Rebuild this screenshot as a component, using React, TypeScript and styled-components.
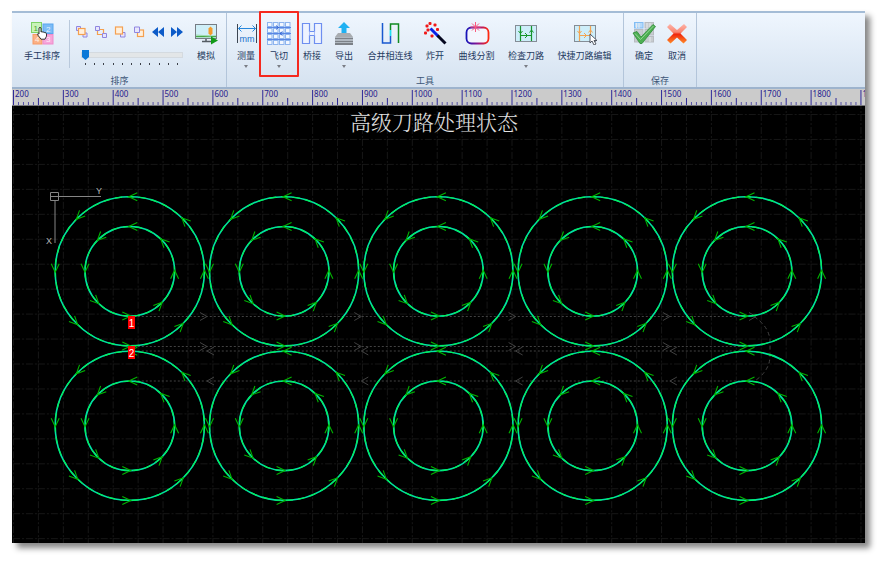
import React from "react";
import styled, { createGlobalStyle } from "styled-components";

const GlobalStyle = createGlobalStyle`
  * { box-sizing: border-box; }
  html, body, #root { height: 100%; }
  body {
    margin: 0;
    background: #fff;
    font-family: "Noto Sans", "Noto Sans CJK SC", sans-serif;
  }
`;

const Page = styled.div`
  display: flex;
  min-height: 100%;
  padding: 11px 27px 23px 12px;
`;

const Window = styled.main`
  flex: 1;
  min-width: 0;
  display: flex;
  flex-direction: column;
  box-shadow: 5px 5px 6px rgba(0, 0, 0, 0.48);
`;

const Ribbon = styled.header`
  display: flex;
  height: 78px;
  padding-left: 1px;
  border-top: 2px solid #a4bcd6;
  border-bottom: 2px solid #9db3cd;
  background: linear-gradient(#eff6fe, #d5e2f0);
`;

const Group = styled.section`
  display: flex;
  flex-direction: column;
  justify-content: space-between;
  padding: 0 3px;
  border-right: 1px solid #b3c5da;
`;

const Items = styled.div`
  display: flex;
  align-items: flex-start;
`;

const Caption = styled.h2`
  margin: 0;
  font-size: 9px;
  line-height: 12px;
  font-weight: 400;
  text-align: center;
  color: #3d5677;
`;

const Tool = styled.button<{ $width: number }>`
  position: relative;
  display: flex;
  flex-direction: column;
  align-items: center;
  width: ${(p) => p.$width}px;
  height: 60px;
  padding: 8px 0 0;
  border: 0;
  background: none;
  color: #1e3a5f;
  font-family: inherit;
  font-size: 9px;
  line-height: 12px;
  white-space: nowrap;
`;

const ToolLabel = styled.span`
  margin-top: 5px;
`;

const Caret = styled.span`
  margin-top: 3px;
  border: 2px solid transparent;
  border-top: 3px solid #7a7d85;
  border-bottom: 0;
`;

const Highlight = styled.span`
  position: absolute;
  inset: -2px -3px -4px;
  border: 2px solid #f5291f;
  border-radius: 1px;
`;

const Divider = styled.div`
  width: 1px;
  height: 48px;
  margin: 7px 0 0 1px;
  background: #b9c9dc;
`;

const OrderPanel = styled.div`
  width: 119px;
  padding: 9px 0 0 2px;
`;

const OrderRow = styled.div`
  display: flex;
`;

const SmallTool = styled.button`
  display: flex;
  justify-content: center;
  align-items: center;
  width: 19px;
  height: 20px;
  padding: 0;
  border: 0;
  background: none;
`;

const SliderBox = styled.div`
  width: 102px;
  margin: 8px 0 0 9px;
  display: flex;
  flex-direction: column;
`;

const Slider = styled.input`
  appearance: none;
  width: 100%;
  height: 10px;
  margin: 0;
  background: transparent;
  &::-webkit-slider-runnable-track {
    height: 6px;
    background: #e3e6e8;
    border: 1px solid #d4dae0;
  }
  &::-webkit-slider-thumb {
    appearance: none;
    width: 7px;
    height: 10px;
    margin-top: -3px;
    background: #0b79d8;
    clip-path: polygon(0 0, 100% 0, 100% 70%, 50% 100%, 0 70%);
  }
`;

const Ticks = styled.div`
  display: flex;
  justify-content: space-between;
  padding: 0 5px 0 4px;
  margin-top: 3px;
`;

const Tick = styled.span`
  width: 1px;
  height: 2px;
  background: #3c4048;
`;

const RulerSvg = styled.svg`
  display: block;
  width: 100%;
  height: 17px;
  background: #cbcbcb;
`;

const Stage = styled.div`
  position: relative;
  flex: 1;
  min-height: 437px;
  background: #000;
`;

const Drawing = styled.svg`
  position: absolute;
  inset: 0;
  width: 100%;
  height: 100%;
`;

const StageTitle = styled.h1`
  position: relative;
  margin: 0;
  padding-right: 9px;
  text-align: center;
  font-family: "Noto Serif CJK SC", "Noto Sans CJK SC", sans-serif;
  font-size: 21px;
  line-height: 30px;
  font-weight: 300;
  color: #e2e2e2;
`;

const Glyph = ({ children }: { children: React.ReactNode }) => (
  <svg width="26" height="24" viewBox="0 0 26 24" fill="none" aria-hidden="true">
    {children}
  </svg>
);

const ManualIcon = () => (
  <Glyph>
    <rect x="2.500" y="1.500" width="10" height="10" fill="#c9f3b9" stroke="#7ed267" />
    <rect x="14" y="3" width="10" height="9.500" fill="#7cbcf6" stroke="#5aa6ee" />
    <rect x="4" y="13.500" width="9" height="9.500" fill="#fbb185" stroke="#f79a66" />
    <rect x="14" y="13.500" width="10" height="9.500" fill="#f6a6da" stroke="#ee8bcb" />
    <g fontSize="8" fontFamily="Liberation Sans, sans-serif">
      <text x="4.500" y="9.500" fill="#4aa332">1</text>
      <text x="17" y="10.500" fill="#e6f3ff">2</text>
      <text x="6" y="21" fill="#fff0e6">4</text>
      <text x="17" y="21" fill="#ffeaf8">3</text>
    </g>
    <path d="M10 13V7q1-1.500 2 0v4q1-1 2 .3 1-.8 1.800.4 1.500-.4 1.700 1v2.500l-1.500 3h-4l-3.500-4.500q-.2-1.500 1.500-.7z" fill="#fff" stroke="#222" strokeWidth=".9" />
  </Glyph>
);

const SimulateIcon = () => (
  <Glyph>
    <rect x="2.500" y="3.500" width="21" height="14" fill="#cfeff8" stroke="#757c84" />
    <path d="M3 15.500h20" stroke="#48a948" strokeWidth="1.500" />
    <path d="M3 14l15 1" stroke="#9edbb0" />
    <path d="M17.500 5.500l2 2v5l-2 2-2-2v-5z" fill="#f49b2c" />
    <path d="M9 20.500h10M13 18v2" stroke="#555c63" strokeWidth="1.500" />
    <path d="M18 15.500l7 4-7 4z" fill="#119a18" />
  </Glyph>
);

const MeasureIcon = () => (
  <Glyph>
    <path d="M4.500 3v19M23.500 3v19" stroke="#3d4652" />
    <path d="M5.500 7.500h17M8.500 4.500l-3 3 3 3M19.500 4.500l3 3-3 3" stroke="#2687dc" />
    <text x="6.500" y="21" fontSize="9" fontFamily="Liberation Sans, sans-serif" fill="#1670cc">mm</text>
  </Glyph>
);

const FlyCutIcon = () => (
  <Glyph>
    {[1, 7, 13, 19].map((y) =>
      [1, 7, 13, 19].map((x) => (
        <rect key={`${x}-${y}`} x={x + 0.5} y={y + 0.5} width="4.500" height="4" fill="#f2f7ff" stroke="#8db4ee" />
      ))
    )}
    <path d="M1 6.500h24M1 12.500h24M1 18.500h24" stroke="#5a86e4" />
    <path d="M10 4.500l2.500 2-2.500 2M16.500 10.500l-2.500 2 2.500 2" stroke="#2455cc" strokeWidth=".8" />
  </Glyph>
);

const BridgeIcon = () => (
  <Glyph>
    <path d="M3.500 2.500h7v8h5v-8h7v20h-7v-8h-5v8h-7z" fill="#eef3ff" stroke="#6e8ff0" strokeWidth="1.200" />
    <path d="M10.500 10.500v4M15.500 10.500v4" stroke="#a9bcf6" />
  </Glyph>
);

const ExportIcon = () => (
  <Glyph>
    <path d="M13 1l6 6h-3.500v5h-5V7H7z" fill="#1fb1f2" />
    <path d="M7 12h12l3 4H4z" fill="#a8acb0" />
    <path d="M4 17.500h18M4 20.500h18M4 23h18" stroke="#7c8187" strokeWidth="2" />
  </Glyph>
);

const MergeIcon = () => (
  <Glyph>
    <path d="M5.500 2v20h8v-7" stroke="#1858cf" strokeWidth="1.500" />
    <path d="M13.500 15V9" stroke="#20dff2" strokeWidth="1.800" />
    <path d="M13.500 9V3h8v19" stroke="#118a20" strokeWidth="1.500" />
  </Glyph>
);

const ExplodeIcon = () => (
  <Glyph>
    <path d="M8.500 7.500l8 8" stroke="#0a22e8" strokeWidth="3" />
    <path d="M15.500 14.500l8 8" stroke="#05071f" strokeWidth="3" />
    {[[5, 5], [8, 2.5], [13, 4], [3.5, 12], [6, 9], [10, 15], [15.5, 8.5]].map(([x, y]) => (
      <rect key={`${x}-${y}`} x={x - 1.5} y={y - 1.5} width="3" height="3" rx="1" fill="#f01818" />
    ))}
  </Glyph>
);

const SplitIcon = () => (
  <Glyph>
    <defs>
      <linearGradient id="split" x1="0" x2="1">
        <stop offset="0" stopColor="#1714b8" />
        <stop offset=".5" stopColor="#8a1490" />
        <stop offset="1" stopColor="#ff2a10" />
      </linearGradient>
    </defs>
    <rect x="2.500" y="6.500" width="22" height="16" rx="5" fill="#f3f6fd" stroke="url(#split)" strokeWidth="1.800" />
    <path d="M11.500 1v10M6.500 6h10M8 2.500l7 7M15 2.500l-7 7" stroke="#fa5a7c" />
  </Glyph>
);

const TrackLines = ({ color }: { color: string }) => (
  <>
    <rect x="2.500" y="4.500" width="21" height="16" fill="#cdeefa" stroke="#858d96" />
    <path d="M7.500 5v15M18.500 5v15M7.500 14.500h11" stroke={color} strokeWidth="1.200" />
    <path d="M5.500 10l2 2.500 2-2.500M16.500 11.500l2-2.500 2 2.500M12 12l2.500 2.500L12 17" stroke={color} />
  </>
);

const CheckPathIcon = () => (
  <Glyph>
    <TrackLines color="#16962d" />
  </Glyph>
);

const QuickEditIcon = () => (
  <Glyph>
    <TrackLines color="#f2a452" />
    <path d="M18 13v9l2-2 2 4 2-1-2-3.500h3z" fill="#fff" stroke="#454b55" strokeWidth=".9" />
  </Glyph>
);

const ConfirmIcon = () => (
  <Glyph>
    {[0, 1, 2].map((r) =>
      [0, 1].map((c) => (
        <rect
          key={`${r}-${c}`}
          x={3.5 + c * 10.5}
          y={1.5 + r * 7}
          width="8.500"
          height="5.500"
          fill={r === 0 && c === 0 ? "#b4dafb" : "#c8ccd0"}
          stroke={r === 0 && c === 0 ? "#83bdf3" : "#b8bcc1"}
        />
      ))
    )}
    <path d="M5.500 2v5M8 2v5M16 2v5M19 2v5M16 9v5M19 16v5M8 16v5" stroke="#e6e9ec" />
    <path d="M2 12l4-1.500 4 5.500L22 3.500l2.500 2L11 22.500H9z" fill="#4daf52" stroke="#2f8b38" strokeWidth=".8" />
    <path d="M4 12.500l5.500 6L22.500 5" stroke="#92d794" />
  </Glyph>
);

const CancelIcon = () => (
  <Glyph>
    <defs>
      <linearGradient id="cancel" x1="0" y1="0" x2="0" y2="1">
        <stop offset="0" stopColor="#fdb5aa" />
        <stop offset=".42" stopColor="#fa8470" />
        <stop offset=".52" stopColor="#f0250c" />
        <stop offset="1" stopColor="#ff8c28" />
      </linearGradient>
    </defs>
    <path d="M6 3l7 6 7-6 3 3-6.500 6.500L23 19l-3.500 3.500-6.500-6-6.500 6L3 19l6.500-6.500L3 6z" fill="url(#cancel)" />
  </Glyph>
);

type OrderKind = "front" | "forward" | "backward" | "back" | "previous" | "next";

const SmallGlyph = ({ kind }: { kind: OrderKind }) => (
  <svg width="14" height="14" viewBox="0 0 14 14" fill="none" aria-hidden="true">
    {kind === "front" && (
      <>
        <path d="M1.500 1.500h4v4h-4zM8 8h4v4H8z" stroke="#8f86e0" fill="#e8e6fc" />
        <rect x="3.500" y="3.500" width="6.500" height="6" fill="#fff0dd" stroke="#f5a050" strokeWidth="1.200" />
      </>
    )}
    {kind === "forward" && (
      <>
        <path d="M3.500 5v4.500H9M5.500 4.500h4V9" stroke="#f5a050" strokeWidth="1.200" />
        <path d="M1.500 1.500h4v4h-4zM8.500 8.500h4v4h-4z" stroke="#8f86e0" fill="#e8e6fc" />
      </>
    )}
    {kind === "backward" && (
      <>
        <path d="M7.500 7.500h4.500v4.500H7.500z" stroke="#8f86e0" fill="#e8e6fc" />
        <rect x="2.500" y="2" width="7" height="7" fill="#fff0dd" stroke="#f5a050" strokeWidth="1.200" />
      </>
    )}
    {kind === "back" && (
      <>
        <rect x="5.500" y="5" width="6" height="6.500" fill="#fff0dd" stroke="#f5a050" strokeWidth="1.200" />
        <path d="M2.500 2h5v5.500h-5z" stroke="#8f86e0" fill="#e8e6fc" />
      </>
    )}
    {kind === "previous" && <path d="M7 2v10L1 7zM13 2v10L7 7z" fill="#0d5bc8" />}
    {kind === "next" && <path d="M1 2v10l6-5zM7 2v10l6-5z" fill="#0d5bc8" />}
  </svg>
);

const orderTools: { kind: OrderKind; label: string }[] = [
  { kind: "front", label: "最前" },
  { kind: "forward", label: "向前" },
  { kind: "backward", label: "向后" },
  { kind: "back", label: "最后" },
  { kind: "previous", label: "上一个" },
  { kind: "next", label: "下一个" },
];

interface ToolSpec {
  label: string;
  width: number;
  icon: React.ReactNode;
  menu?: boolean;
  highlighted?: boolean;
}

const pathTools: ToolSpec[] = [
  { label: "测量", width: 32, icon: <MeasureIcon />, menu: true },
  { label: "飞切", width: 34, icon: <FlyCutIcon />, menu: true, highlighted: true },
  { label: "桥接", width: 32, icon: <BridgeIcon /> },
  { label: "导出", width: 32, icon: <ExportIcon />, menu: true },
  { label: "合并相连线", width: 60, icon: <MergeIcon /> },
  { label: "炸开", width: 30, icon: <ExplodeIcon /> },
  { label: "曲线分割", width: 53, icon: <SplitIcon /> },
  { label: "检查刀路", width: 46, icon: <CheckPathIcon />, menu: true },
  { label: "快捷刀路编辑", width: 71, icon: <QuickEditIcon /> },
];

const saveTools: ToolSpec[] = [
  { label: "确定", width: 34, icon: <ConfirmIcon /> },
  { label: "取消", width: 32, icon: <CancelIcon /> },
];

const ToolButton = ({ label, width, icon, menu, highlighted }: ToolSpec) => (
  <Tool type="button" $width={width}>
    {icon}
    <ToolLabel>{label}</ToolLabel>
    {menu && <Caret />}
    {highlighted && <Highlight />}
  </Tool>
);

const UNIT = 49.85;

const Ruler = () => {
  const marks = Array.from({ length: 172 }, (_, i) => i);
  return (
    <RulerSvg role="img" aria-label="标尺">
      {marks.map((i) => {
        const x = 1.5 + (i * UNIT) / 10;
        const top = i % 10 === 0 ? 1 : i % 5 === 0 ? 9 : 13;
        return <path key={i} d={`M${x} ${top}V16`} stroke={i % 5 === 0 ? "#2f2a9a" : "#5652a8"} />;
      })}
      {marks.slice(0, 18).map((i) => (
        <text key={i} x={3 + i * UNIT} y="8" fontSize="8" fill="#24208f">
          {200 + i * 100}
        </text>
      ))}
      <path d="M0 16.500H4000" stroke="#77777c" />
    </RulerSvg>
  );
};

const PITCH = 154.3;
const FIRST_X = 117.8;
const ROWS = [165.3, 319.8];
const COLUMNS = [0, 1, 2, 3, 4].map((i) => FIRST_X + i * PITCH);
const RADII = [74.6, 44.8];

const Contour = ({ cx, cy, r }: { cx: number; cy: number; r: number }) => (
  <g fill="none">
    <circle cx={cx} cy={cy} r={r} stroke="#00e2a4" strokeWidth="1.600" />
    <circle cx={cx} cy={cy} r={r} stroke="#00f060" strokeWidth="1.200" strokeDasharray="7 5" />
    {[0, 45, 90, 135, 180, 225, 270, 315].map((a) => (
      <path
        key={a}
        d="M7.500 -4L-1 0L7.500 4"
        transform={`translate(${cx} ${cy}) rotate(${-a}) translate(0 ${-r})`}
        stroke="#00b400"
        strokeWidth="1.100"
      />
    ))}
  </g>
);

const travelLines = [
  { y: 210.5, direction: 1 },
  { y: 240.5, direction: 1 },
  { y: 245, direction: -1 },
  { y: 275, direction: -1 },
];

const ToolPaths = () => (
  <Drawing role="img" aria-label="刀路">
    <defs>
      <pattern id="grid" x="1" y="8" width={UNIT / 2} height="24.950" patternUnits="userSpaceOnUse">
        <path d="M.5 0V25M0 .5H25" stroke="#161616" strokeDasharray="7 2 2 2" />
      </pattern>
    </defs>
    <rect width="100%" height="100%" fill="url(#grid)" />
    <g fill="none" stroke="#424242">
      {travelLines.map(({ y, direction }) => (
        <g key={y}>
          <path d={`M${COLUMNS[0]} ${y}H${COLUMNS[4]}`} strokeDasharray="2 2" />
          {[0, 1, 2, 3].map((i) => {
            const tip = 195 + i * PITCH;
            return <path key={i} d={`M${tip - direction * 7} ${y - 4}L${tip} ${y}L${tip - direction * 7} ${y + 4}`} />;
          })}
        </g>
      ))}
      <path d="M737 206.500l7 4-7 4" />
      <path d="M742 210.500q15 10 16 24v17q-1 14-16 24" strokeDasharray="4 3" />
    </g>
    {ROWS.map((cy) => COLUMNS.map((cx) => RADII.map((r) => <Contour key={`${cx}-${cy}-${r}`} cx={cx} cy={cy} r={r} />)))}
    <g fill="none" stroke="#858585">
      <path d="M38.500 86.500h8v8h-8zM38.500 90.500H89M43 95V137" />
    </g>
    <g fontSize="9" fontFamily="Liberation Sans, sans-serif" fill="#b4b4b4">
      <text x="84" y="88">Y</text>
      <text x="34" y="138">X</text>
    </g>
    <g fontSize="10" fontFamily="Liberation Sans, sans-serif" fill="#fff" textAnchor="middle">
      <rect x="116" y="210" width="7" height="13" fill="#f00" />
      <text x="119.500" y="221">1</text>
      <rect x="116" y="240" width="7" height="13" fill="#f00" />
      <text x="119.500" y="251">2</text>
    </g>
  </Drawing>
);

export default function App() {
  return (
    <>
      <GlobalStyle />
      <Page>
        <Window>
          <Ribbon>
            <Group>
              <Items>
                <ToolButton label="手工排序" width={52} icon={<ManualIcon />} />
                <Divider />
                <OrderPanel>
                  <OrderRow>
                    {orderTools.map(({ kind, label }) => (
                      <SmallTool key={kind} type="button" aria-label={label}>
                        <SmallGlyph kind={kind} />
                      </SmallTool>
                    ))}
                  </OrderRow>
                  <SliderBox>
                    <Slider type="range" min={0} max={10} defaultValue={0} aria-label="排序进度" />
                    <Ticks>
                      {Array.from({ length: 11 }, (_, i) => (
                        <Tick key={i} />
                      ))}
                    </Ticks>
                  </SliderBox>
                </OrderPanel>
                <ToolButton label="模拟" width={34} icon={<SimulateIcon />} />
              </Items>
              <Caption>排序</Caption>
            </Group>
            <Group>
              <Items>
                {pathTools.map((tool) => (
                  <ToolButton key={tool.label} {...tool} />
                ))}
              </Items>
              <Caption>工具</Caption>
            </Group>
            <Group>
              <Items>
                {saveTools.map((tool) => (
                  <ToolButton key={tool.label} {...tool} />
                ))}
              </Items>
              <Caption>保存</Caption>
            </Group>
          </Ribbon>
          <Ruler />
          <Stage>
            <ToolPaths />
            <StageTitle>高级刀路处理状态</StageTitle>
          </Stage>
        </Window>
      </Page>
    </>
  );
}
